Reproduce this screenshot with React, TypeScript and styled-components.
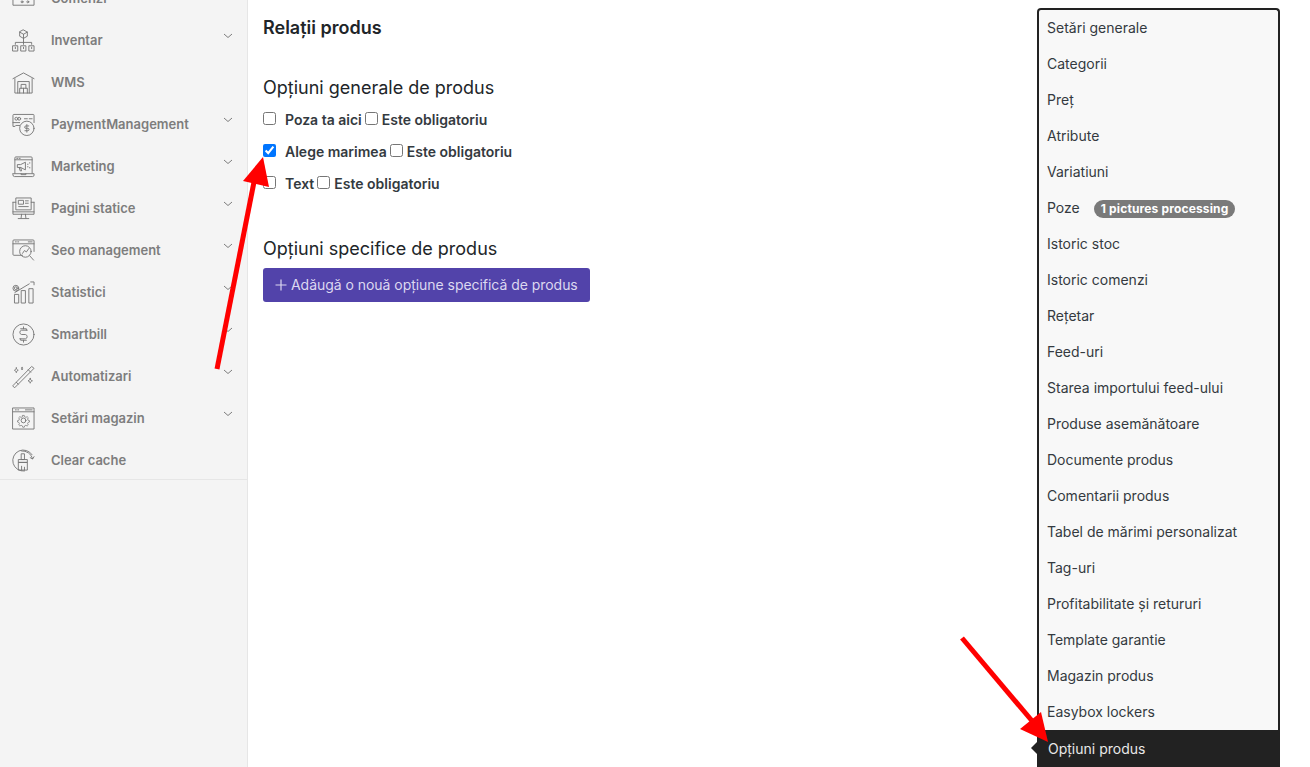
import { ReactNode } from "react"
import styled, { createGlobalStyle } from "styled-components"

const GlobalStyle = createGlobalStyle`
  html, body {
    margin: 0;
    padding: 0;
    height: 767px;
    overflow: hidden;
    background: #fff;
    font-family: "Inter", "Liberation Sans", sans-serif;
    color: #212529;
  }
  * { box-sizing: border-box; }
`

const Glyph = ({ children }: { children: ReactNode }) => (
  <IconSvg viewBox="0 0 24 24" fill="none" stroke="#757575" strokeWidth="0.95" strokeLinejoin="round" strokeLinecap="round">
    {children}
  </IconSvg>
)

const icons: Record<string, ReactNode> = {
  comenzi: (
    <Glyph>
      <path d="M1 1v18h22V1" />
      <path d="M6 6h2l1.500 7h8l1.500-5H9" />
      <circle cx="10.500" cy="15.500" r="1" />
      <circle cx="16.500" cy="15.500" r="1" />
    </Glyph>
  ),
  inventar: (
    <Glyph>
      <path d="M12 1l4 2.200v4.300l-4 2.300-4-2.300V3.200z" />
      <path d="M8 3.200l4 2.300 4-2.300M12 5.500v4.300M12 10v4M3.500 16v-2h17v2M12 14v2" />
      <path d="M1 17.500h5v5.500H1zM9.500 17.500h5v5.500h-5zM18 17.500h5v5.500h-5z" />
      <path d="M3.500 19v1.500M12 19v1.500M20.500 19v1.500" />
    </Glyph>
  ),
  wms: (
    <Glyph>
      <path d="M1 8l11-6 11 6" />
      <path d="M3 8v15h18V8" />
      <path d="M6 23V11h12v12" />
      <path d="M8 23v-5h8v5M12 18v5M9.500 18v-4h5v4" />
    </Glyph>
  ),
  payment: (
    <Glyph>
      <path d="M3 14H1V2.500A1 1 0 012 1.500h20a1 1 0 011 1V10" />
      <circle cx="4.500" cy="6" r="1.500" />
      <circle cx="7.500" cy="6" r="1.500" />
      <path d="M13 6h3M18 6h3M1 10h7M4 13h4" />
      <circle cx="15.500" cy="16" r="7.500" />
      <path d="M17.500 13.500h-3a1.200 1.200 0 000 2.500h2a1.200 1.200 0 010 2.500h-3M15.500 12v8" />
    </Glyph>
  ),
  marketing: (
    <Glyph>
      <path d="M3 19V3a1 1 0 011-1h16a1 1 0 011 1v16" />
      <path d="M3 5h18M5 3.500h1M7.500 3.500h1" />
      <path d="M1 19.500h22v1.500a1.500 1.500 0 01-1.500 1.500h-19A1.500 1.500 0 011 21zM9.500 19.500v1h5v-1" />
      <path d="M6 10h3l5-2.500v8L9 13H6zM7.500 13l1 3.500h1.500l-1-3.500" />
      <path d="M16.500 9.500v.5M16.500 12v.5M18.500 8v.5M18.500 13v.5" />
    </Glyph>
  ),
  pagini: (
    <Glyph>
      <path d="M1 5.500h3M20 5.500h3M1 5.500v12.500h22V5.500M1 15.500h22" />
      <path d="M4 13V1h16v12z" />
      <path d="M7 3.500h5v4H7zM14 4h3M14 6.500h3M7 10h10" />
      <path d="M10 18l-.5 4M14 18l.5 4M6.500 22.500h11" />
    </Glyph>
  ),
  seo: (
    <Glyph>
      <path d="M11 17H2a1 1 0 01-1-1V2a1 1 0 011-1h20a1 1 0 011 1v11" />
      <path d="M1 5h22M3.500 3h1M6 3h1M17 3h4" />
      <circle cx="14" cy="13" r="6" />
      <path d="M11 15l2-3 2 1.500 2.500-3.500M18.500 17.500l4 4.500" />
    </Glyph>
  ),
  statistici: (
    <Glyph>
      <circle cx="4" cy="7.500" r="3" />
      <circle cx="4" cy="7.500" r="1.500" />
      <path d="M3 14h4v9H3zM10 10h4v13h-4zM18 8h4v15h-4z" />
      <path d="M3 12l15-9M19.500 1H23v3" />
    </Glyph>
  ),
  smartbill: (
    <Glyph>
      <circle cx="12" cy="12" r="11" />
      <path d="M16 7.500h-6a2.300 2.300 0 000 4.500h4a2.300 2.300 0 010 4.500H8M9 6h6l0 1.500M15 18H9v-1.500M12 4v2M12 18v2" />
    </Glyph>
  ),
  automatizari: (
    <Glyph>
      <path d="M1 21.500L20.500 1.500l2.500 2L3 23.500z" />
      <path d="M17 5l2.500 2.500M4.500 18l2 2" />
      <path d="M4.500 3c.3 1.500.7 2 2 2.500-1.300.5-1.700 1-2 2.500-.3-1.500-.7-2-2-2.500 1.300-.5 1.700-1 2-2.500zM10.500 2.500c.2.800.4 1 1 1.300-.6.300-.8.500-1 1.300-.2-.8-.4-1-1-1.300.6-.3.800-.5 1-1.300zM19 14c.3 1.500.7 2 2.300 2.500-1.600.5-2 1-2.300 2.500-.3-1.500-.7-2-2.300-2.500 1.600-.5 2-1 2.300-2.500z" />
    </Glyph>
  ),
  setari: (
    <Glyph>
      <path d="M1 1h22v22H1zM1 5h22M3.500 3h1M6 3h1M14 3h7" />
      <circle cx="12" cy="14" r="2.500" />
      <path d="M11 7.500h2l.5 1.800 1.600.7 1.700-.9 1.400 1.400-.9 1.700.7 1.600 1.800.5v1.800l-1.800.5-.7 1.600.9 1.700-1.400 1.400-1.700-.9-1.600.7-.5 1.800h-2l-.5-1.800-1.600-.7-1.700.9-1.400-1.400.9-1.700-.7-1.600-1.800-.5v-1.800l1.800-.5.7-1.600-.9-1.700 1.400-1.400 1.700.9 1.600-.7z" transform="translate(2.400 2.800) scale(.8)" />
    </Glyph>
  ),
  cache: (
    <Glyph>
      <path d="M21 6A11 11 0 1013 23" />
      <path d="M10 2a11 11 0 0111.500 8M23 8l-1.500 2.500L19 9" />
      <path d="M10 5h3v6h-3zM7 11h9v3H7zM7 14h9v8H7z" />
      <path d="M10 22v-4M13 22v-3" />
    </Glyph>
  ),
}

const navItems = [
  { label: "Comenzi", icon: "comenzi", arrow: true },
  { label: "Inventar", icon: "inventar", arrow: true },
  { label: "WMS", icon: "wms", arrow: false },
  { label: "PaymentManagement", icon: "payment", arrow: true },
  { label: "Marketing", icon: "marketing", arrow: true },
  { label: "Pagini statice", icon: "pagini", arrow: true },
  { label: "Seo management", icon: "seo", arrow: true },
  { label: "Statistici", icon: "statistici", arrow: true },
  { label: "Smartbill", icon: "smartbill", arrow: true },
  { label: "Automatizari", icon: "automatizari", arrow: true },
  { label: "Setări magazin", icon: "setari", arrow: true },
  { label: "Clear cache", icon: "cache", arrow: false },
]

const generalOptions = [
  { label: "Poza ta aici", checked: false },
  { label: "Alege marimea", checked: true },
  { label: "Text", checked: false },
]

const menuItems = [
  "Setări generale",
  "Categorii",
  "Preț",
  "Atribute",
  "Variatiuni",
  "Poze",
  "Istoric stoc",
  "Istoric comenzi",
  "Rețetar",
  "Feed-uri",
  "Starea importului feed-ului",
  "Produse asemănătoare",
  "Documente produs",
  "Comentarii produs",
  "Tabel de mărimi personalizat",
  "Tag-uri",
  "Profitabilitate și retururi",
  "Template garantie",
  "Magazin produs",
  "Easybox lockers",
]

const App = () => {
  return (
    <Page>
      <GlobalStyle />
      <Sidebar>
        <NavList>
          {navItems.map((item) => (
            <NavRow key={item.label}>
              <IconSlot>{icons[item.icon]}</IconSlot>
              <NavLabel>{item.label}</NavLabel>
              {item.arrow && (
                <Chevron viewBox="0 0 10 6">
                  <path d="M1 1l4 3.500L9 1" />
                </Chevron>
              )}
            </NavRow>
          ))}
        </NavList>
      </Sidebar>

      <Main>
        <Title>Relații produs</Title>
        <SectionTitle>Opțiuni generale de produs</SectionTitle>
        <Options>
          {generalOptions.map((option) => (
            <OptionRow key={option.label}>
              <OptionCheck type="checkbox" defaultChecked={option.checked} />
              <OptionLabel>{option.label}</OptionLabel>
              <RequiredCheck type="checkbox" />
              <OptionLabel>Este obligatoriu</OptionLabel>
            </OptionRow>
          ))}
        </Options>
        <SpecificTitle>Opțiuni specifice de produs</SpecificTitle>
        <AddButton>
          <PlusIcon viewBox="0 0 12 12">
            <path d="M6 .5v11M.5 6h11" />
          </PlusIcon>
          Adăugă o nouă opțiune specifică de produs
        </AddButton>
      </Main>

      <Aside>
        <MenuPanel>
          {menuItems.map((item) => (
            <MenuItem key={item}>
              {item}
              {item === "Poze" && <Badge>1 pictures processing</Badge>}
            </MenuItem>
          ))}
        </MenuPanel>
        <ActiveItem>Opțiuni produs</ActiveItem>
      </Aside>

      <Overlay viewBox="0 0 1310 767">
        <path d="M217 369L254 182" stroke="#ff0000" strokeWidth="5" />
        <path d="M263 157L269 187L243 181z" fill="#ff0000" />
        <path d="M962 638L1033 722" stroke="#ff0000" strokeWidth="5" />
        <path d="M1048 742L1020 729L1041 712z" fill="#ff0000" />
      </Overlay>
    </Page>
  )
}

const Page = styled.div`
  position: relative;
  display: flex;
  width: 1310px;
  height: 767px;
  overflow: hidden;
`

const Sidebar = styled.nav`
  flex: 0 0 248px;
  background: #f4f4f4;
  border-right: 1px solid #e6e6e6;
`

const NavList = styled.ul`
  list-style: none;
  margin: -23px 0 0;
  padding: 0;
  border-bottom: 1px solid #e6e6e6;
`

const NavRow = styled.li`
  display: flex;
  align-items: center;
  height: 42px;
  padding: 0 14px 0 12px;

  &:last-child {
    margin-bottom: -2px;
  }
`

const IconSlot = styled.span`
  display: flex;
  width: 39px;
  flex: none;
`

const IconSvg = styled.svg`
  display: block;
  width: 23px;
  height: 23px;
`

const NavLabel = styled.span`
  flex: 1;
  font-size: 13px;
  font-weight: 600;
  color: #7d7d7d;
`

const Chevron = styled.svg`
  width: 10px;
  height: 6px;
  margin-top: -8px;
  fill: none;
  stroke: #7d7d7d;
  stroke-width: 1;
`

const Main = styled.main`
  flex: 1;
  padding: 17px 15px 0;
`

const Title = styled.h1`
  margin: 0 0 38px;
  font-size: 18px;
  line-height: 22px;
  font-weight: 600;
  color: #212529;
`

const SectionTitle = styled.h2`
  margin: 0;
  font-size: 18px;
  line-height: 22px;
  font-weight: 400;
  color: #212529;
`

const SpecificTitle = styled(SectionTitle)`
  margin-top: 39px;
`

const Options = styled.div`
  display: flex;
  flex-direction: column;
  margin-top: 4px;
`

const OptionRow = styled.label`
  display: flex;
  align-items: center;
  height: 32px;
`

const OptionCheck = styled.input`
  width: 13px;
  height: 13px;
  margin: 0 9px 2px 0;
  flex: none;
`

const RequiredCheck = styled.input`
  width: 13px;
  height: 13px;
  margin: 0 4px 2px 3px;
  flex: none;
`

const OptionLabel = styled.span`
  font-size: 14px;
  font-weight: 600;
  color: #343a40;
`

const AddButton = styled.button`
  display: flex;
  align-items: center;
  gap: 4px;
  margin-top: 8px;
  width: 327px;
  height: 34px;
  padding: 0 0 1px 12px;
  border: none;
  border-radius: 3px;
  background: #5243aa;
  color: #dcd8f0;
  font-family: inherit;
  font-size: 14px;
  letter-spacing: -0.04px;
`

const PlusIcon = styled.svg`
  width: 12px;
  height: 12px;
  fill: none;
  stroke: #dcd8f0;
  stroke-width: 1.2;
`

const Aside = styled.aside`
  flex: 0 0 243px;
  margin-right: 30px;
  padding-top: 8px;
  display: flex;
  flex-direction: column;
`

const MenuPanel = styled.div`
  flex: 1;
  background: #f8f8f8;
  border: 2px solid #222;
  border-bottom: none;
  border-radius: 4px 4px 0 0;
`

const MenuItem = styled.div`
  display: flex;
  align-items: center;
  height: 36px;
  padding: 0 0 2px 8px;
  font-size: 14px;
  color: #343a40;
`

const Badge = styled.span`
  display: inline-block;
  margin: 4px 0 0 14px;
  padding: 0 7px;
  height: 18px;
  line-height: 18px;
  border-radius: 9px;
  background: #7a7a7a;
  color: #fff;
  font-size: 12px;
  font-weight: 700;
  letter-spacing: 0.15px;
`

const ActiveItem = styled.div`
  position: relative;
  flex: none;
  display: flex;
  align-items: center;
  height: 37px;
  padding-left: 11px;
  background: #222;
  color: #e8e8e8;
  font-size: 14px;

  &::before {
    content: "";
    position: absolute;
    left: -6px;
    top: 12px;
    border-style: solid;
    border-width: 6px 6px 6px 0;
    border-color: transparent #222 transparent transparent;
  }
`

const Overlay = styled.svg`
  position: absolute;
  inset: 0;
  width: 1310px;
  height: 767px;
  pointer-events: none;
`

export default App
